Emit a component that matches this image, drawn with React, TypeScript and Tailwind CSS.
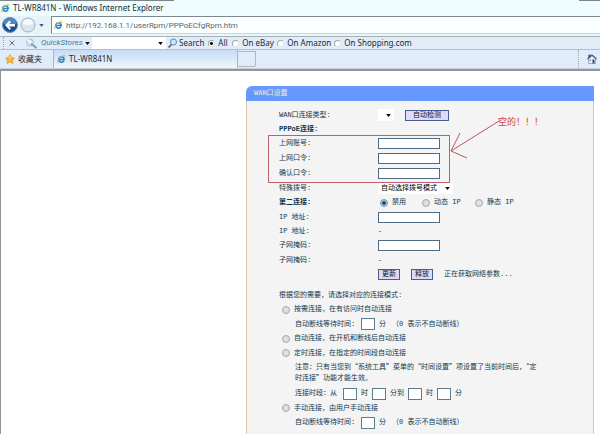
import type { ReactNode } from 'react';
import clsx from 'clsx';

const SEARCH_SITES = [
  { name: 'All', width: 'w-6' },
  { name: 'On eBay', width: 'w-[45px]' },
  { name: 'On Amazon', width: 'w-[57px]' },
  { name: 'On Shopping.com', width: 'w-20' }
];

const ACCOUNT_FIELDS = [
  { id: 'account', label: '上网账号' },
  { id: 'password', label: '上网口令' },
  { id: 'confirm', label: '确认口令' }
];

function IeIcon({ className }: { className?: string }) {
  return (
    <svg viewBox="0 0 20 20" className={clsx('shrink-0', className)} aria-hidden="true">
      <path
        d="M15.5 12.5A6 6 0 1 1 16 10H6"
        fill="none"
        stroke="#2388c8"
        strokeWidth="3.6"
      />
      <path
        d="M2.5 18.5C-1 15 5 6 12 2.500c4-2 7-1.500 6 1.500"
        fill="none"
        stroke="#e3ad2c"
        strokeWidth="2.2"
      />
      <path d="M5 7a6 6 0 0 1 8-2" fill="none" stroke="#7fd0f4" strokeWidth="1.500" />
    </svg>
  );
}

function Caret({ className }: { className?: string }) {
  return (
    <svg viewBox="0 0 6 4" className={clsx('h-[3px] w-[5px] shrink-0', className)} aria-hidden="true">
      <path d="M0 0h6L3 4z" fill="currentColor" />
    </svg>
  );
}

function Radio({ name, id, checked }: { name: string; id: string; checked?: boolean }) {
  return (
    <input
      type="radio"
      name={name}
      id={id}
      defaultChecked={checked}
      className="size-2 shrink-0 appearance-none rounded-full border border-[#a4a8ac] bg-[#dedfe1] checked:border-[#7c94a6] checked:bg-[radial-gradient(circle,#123f66_0_1px,#d5e6f1_3px)]"
    />
  );
}

function Row({ label, id, bold, tall, children }: {
  label: string;
  id?: string;
  bold?: boolean;
  tall?: boolean;
  children?: ReactNode;
}) {
  return (
    <div className={clsx('flex items-center', tall ? 'h-[15px]' : 'h-3.5')}>
      <label htmlFor={id} className={clsx('w-[99px] shrink-0', bold && 'font-bold')}>
        {label}:
      </label>
      {children}
    </div>
  );
}

function TextBox({ id, type = 'text' }: { id: string; type?: string }) {
  return <input id={id} type={type} className="h-[11px] w-[62px] border border-[#4d6b85] bg-white px-0.5" />;
}

function SmallBox({ label }: { label: string }) {
  return (
    <input
      type="text"
      aria-label={label}
      className="mx-1 h-3 w-3.5 shrink-0 border border-[#5d7c90] bg-white"
    />
  );
}

function PushButton({ children }: { children: ReactNode }) {
  return (
    <button type="button" className="h-[11px] border border-[#4a5a92] bg-[#dcdcf8] px-[3px] leading-[9px] text-[#10152e]">
      {children}
    </button>
  );
}

function Mode({ id, children, tall }: { id: string; children: ReactNode; tall?: boolean }) {
  return (
    <div className={clsx('flex items-center gap-1 pl-[3px]', tall ? 'h-[15px]' : 'h-3.5')}>
      <Radio name="mode" id={id} />
      <label htmlFor={id}>{children}</label>
    </div>
  );
}

function IdleTime({ tall }: { tall?: boolean }) {
  return (
    <div className={clsx('flex items-center pl-4', tall ? 'h-[15px]' : 'h-3.5')}>
      <span className="w-[62px]">自动断线等待时间:</span>
      <SmallBox label="自动断线等待时间" />
      <span>分</span>
      <span className="ml-1.5">（0 表示不自动断线）</span>
    </div>
  );
}

function BrowserChrome() {
  return (
    <header className="font-['Noto_Sans','Noto_Sans_CJK_SC',sans-serif] text-[8px] leading-none text-[#222a33]">
      <div className="bg-[#effdfe]">
        <div className="flex h-px justify-between">
          <div className="w-[29%] bg-[#7c8488]" />
          <div className="w-[21px] bg-[#7c8488]" />
        </div>
        <div className="flex h-[15px] items-center gap-[3px] pb-px pl-px">
          <IeIcon className="size-[9px]" />
          <h1 className="whitespace-nowrap">TL-WR841N - Windows Internet Explorer</h1>
        </div>
      </div>

      <div className="flex h-[18px] items-center bg-[#e6f4fa]">
        <button type="button" aria-label="后退" className="ml-0.5">
          <svg viewBox="0 0 32 32" className="size-4">
            <circle cx="16" cy="16" r="15" fill="#164f9c" stroke="#7b91ab" strokeWidth="2" />
            <path d="M3 13a13 12 0 0 1 26 0q-12 5-26 0" fill="#5487c2" />
            <path d="M6 16l9-9 3 3-4 4h12v5H14l4 4-3 3z" fill="#fff" />
          </svg>
        </button>
        <button type="button" aria-label="前进" className="ml-0.5">
          <svg viewBox="0 0 32 32" className="size-4">
            <circle cx="16" cy="16" r="14" fill="#dce6ee" stroke="#a3afba" strokeWidth="2" />
            <path d="M5 14a11 10 0 0 1 22 0q-10 4-22 0" fill="#f5f9fc" />
          </svg>
        </button>
        <Caret className="ml-[3px] text-[#24699b]" />
        <div className="ml-[7px] flex h-full flex-1 items-center gap-[3px] border-y border-l border-t-[#7c8990] border-b-[#ccd5d9] border-l-[#7c8990] bg-[#fbffff] pl-0.5">
          <IeIcon className="size-[9px]" />
          <input
            type="text"
            aria-label="地址"
            defaultValue="http://192.168.1.1/userRpm/PPPoECfgRpm.htm"
            className="h-3 min-w-0 flex-1 font-[Roboto,sans-serif] text-[#5c656b] outline-none"
          />
        </div>
      </div>

      <div className="h-0.5 bg-[#e9f6fb]" />
      <div className="flex h-3.5 items-center whitespace-nowrap border-y border-t-[#a5b0b7] border-b-[#b8c0c5] bg-[#e1ecf8]">
        <div className="ml-[3px] h-3 border-l border-dotted border-[#9aa5b0]" />
        <button type="button" aria-label="关闭工具栏" className="ml-[5px]">
          <svg viewBox="0 0 10 10" className="size-[6px]">
            <path d="M1 1l8 8M9 1L1 9" stroke="#56606a" strokeWidth="1.500" />
          </svg>
        </button>
        <svg viewBox="0 0 26 22" className="ml-2.5 h-[11px] w-[13px]" aria-hidden="true">
          <circle cx="10" cy="9" r="7" fill="#d5e5f0" stroke="#a3bbcb" strokeWidth="2" />
          <path d="M5 3l11 11" stroke="#fff" strokeWidth="3" />
          <path d="M12 11l11 9" stroke="#6fa5c9" strokeWidth="4" />
        </svg>
        <button
          type="button"
          className="ml-[3px] flex w-[49px] items-center justify-between font-[Roboto,sans-serif] text-[#397f9e] italic"
        >
          QuickStores
          <Caret className="text-black" />
        </button>
        <div className="ml-0.5 flex h-full w-[74px] items-center bg-white">
          <input type="text" aria-label="Search text" className="h-full w-[66px] outline-none" />
          <Caret className="text-black" />
        </div>
        <button type="button" className="ml-px flex items-center gap-px">
          <svg viewBox="0 0 22 22" className="size-[11px]" aria-hidden="true">
            <path d="M3 19l7-7" stroke="#825a3a" strokeWidth="3.500" />
            <circle cx="13" cy="8" r="6" fill="#cfeaff" stroke="#4c86bd" strokeWidth="2" />
          </svg>
          Search
        </button>
        <div className="ml-1 flex">
          {SEARCH_SITES.map((site, i) => (
            <label key={site.name} className={clsx('flex items-center gap-[3px]', site.width)}>
              <input
                type="radio"
                name="site"
                defaultChecked={i === 0}
                className="size-[7px] shrink-0 appearance-none rounded-full border border-[#a2a7ab] border-r-[#e2e6e9] border-b-[#e2e6e9] bg-white checked:bg-[radial-gradient(circle,#111_0_1px,#fff_2px)]"
              />
              {site.name}
            </label>
          ))}
        </div>
      </div>

      <nav className="flex h-[18px] items-stretch bg-[#e0ecf9]">
        <button type="button" className="flex w-[54px] items-center gap-[3px] border-r border-[#a9b5c0] pl-[5px]">
          <svg viewBox="0 0 20 20" className="size-[10px]" aria-hidden="true">
            <path d="M10 1l3 6 6 1-4 5 1 6-6-3-6 3 1-6-4-5 6-1z" fill="#f8b42d" stroke="#d78414" />
            <path d="M10 4l2 5H7z" fill="#ffe58e" />
          </svg>
          收藏夹
        </button>
        <a
          href="#wan"
          className="flex w-[184px] items-center gap-[3px] border-r border-[#a9b5c0] bg-linear-to-b from-[#c5dcf5] to-[#eff6fd] pl-[3px]"
        >
          <IeIcon className="size-[9px]" />
          TL-WR841N
        </a>
        <button type="button" aria-label="新选项卡" className="my-px w-[18px] rounded-b-xs border border-l-0 border-[#b0b9c1]" />
        <div className="ml-auto border-l border-dotted border-[#9ba6b0]" />
        <button type="button" aria-label="主页" className="mr-[3px] ml-2">
          <svg viewBox="0 0 20 20" className="size-[10px]">
            <path d="M3 9v10h14V9l-7-6z" fill="#e8edf5" stroke="#596d8d" />
            <path d="M1 10l9-8 9 8" fill="none" stroke="#405c87" strokeWidth="2.500" />
            <path d="M3 1h4v5L3 9z" fill="#304d79" />
            <path d="M11 11h4v8h-4z" fill="#304d79" />
            <path d="M5 11h3v3H5z" fill="#7892b5" />
          </svg>
        </button>
      </nav>
      <div className="h-[3px] border-t border-b-2 border-t-[#c8cfd4] border-b-[#91989d]" />
    </header>
  );
}

export default function App() {
  return (
    <div className="flex min-h-screen flex-col bg-white">
      <BrowserChrome />

      <main className="flex flex-1 border-l border-[#8b9195] pt-[15px] pr-1.5 pl-[calc(41%-1px)] font-['Liberation_Mono','Noto_Sans_CJK_SC',monospace] text-[7px] leading-[11px] text-[#12384c]">
        <section id="wan" className="flex flex-1 flex-col">
          <h2 className="h-[15px] rounded-tl-md bg-[#6699ff] pl-2 leading-[15px] text-[#f0ecd0]">WAN口设置</h2>

          <form className="flex-1 border-x border-[#dfc6a0] bg-[#f4f4f4] pt-[7px] pr-8 pl-8 whitespace-nowrap">
            <Row label="WAN口连接类型" id="type">
              <select id="type" className="h-3 w-4 appearance-none bg-white" />
              <Caret className="pointer-events-none -ml-2 text-black" />
              <div className="ml-3.5 flex">
                <button type="button" className="h-[11px] w-11 border border-[#4a5a92] bg-[#dcdcf8] leading-[9px] text-[#10152e]">
                  自动检测
                </button>
              </div>
            </Row>
            <Row label="PPPoE连接" bold />

            <div className="relative">
              {ACCOUNT_FIELDS.map((field) => (
                <Row key={field.id} label={field.label} id={field.id} tall>
                  <TextBox id={field.id} type={field.id === 'account' ? 'text' : 'password'} />
                </Row>
              ))}
              <div className="pointer-events-none absolute -top-px -left-[11px] h-12 w-[182px] border border-[#c0606a]" />
              <svg
                viewBox="0 0 50 40"
                className="pointer-events-none absolute -top-4 left-[171px] h-10 w-[50px]"
                fill="none"
                stroke="#c0555d"
                aria-hidden="true"
              >
                <path d="M49 1L1 31M10 13L1 31L17 38" />
              </svg>
              <p className="absolute -top-[18px] left-[219px] text-[9px] text-[#cd4343]">空的！！！</p>
            </div>

            <Row label="特殊拨号" id="dial">
              <select id="dial" className="h-[11px] w-[75px] appearance-none bg-white pl-[3px] leading-[11px] text-black">
                <option>自动选择拨号模式</option>
              </select>
              <Caret className="pointer-events-none -ml-2 text-black" />
            </Row>
            <Row label="第二连接" bold tall>
              <div className="flex pl-0.5">
                <div className="flex w-[42px] items-center gap-1">
                  <Radio name="second" id="off" checked />
                  <label htmlFor="off">禁用</label>
                </div>
                <div className="flex w-[53px] items-center gap-1">
                  <Radio name="second" id="dynamic" />
                  <label htmlFor="dynamic">动态 IP</label>
                </div>
                <div className="flex items-center gap-1">
                  <Radio name="second" id="static" />
                  <label htmlFor="static">静态 IP</label>
                </div>
              </div>
            </Row>
            <Row label="IP 地址" id="ip">
              <TextBox id="ip" />
            </Row>
            <Row label="IP 地址">-</Row>
            <Row label="子网掩码" id="mask" tall>
              <TextBox id="mask" />
            </Row>
            <Row label="子网掩码">-</Row>
            <div className="flex h-3.5 items-center gap-[11px] pl-[99px]">
              <PushButton>更新</PushButton>
              <PushButton>释放</PushButton>
              <span>正在获取网络参数...</span>
            </div>

            <p className="mt-[7px] h-3.5 leading-[14px]">根据您的需要，请选择对应的连接模式:</p>
            <Mode id="demand" tall>按需连接，在有访问时自动连接</Mode>
            <IdleTime />
            <Mode id="auto" tall>自动连接，在开机和断线后自动连接</Mode>
            <Mode id="timed">定时连接，在指定的时间段自动连接</Mode>
            <p className="mt-px mb-[3px] pl-4 font-['Noto_Sans_CJK_SC',sans-serif]">
              注意：只有当您到“系统工具”菜单的“时间设置”项设置了当前时间后，“定
              <br />
              时连接”功能才能生效。
            </p>
            <div className="flex h-[15px] items-center pl-4">
              <span className="w-11">连接时段：从</span>
              <SmallBox label="开始小时" />
              时
              <SmallBox label="开始分钟" />
              分到
              <SmallBox label="结束小时" />
              时
              <SmallBox label="结束分钟" />
              分
            </div>
            <Mode id="manual">手动连接，由用户手动连接</Mode>
            <IdleTime tall />
          </form>
        </section>
      </main>
    </div>
  );
}
